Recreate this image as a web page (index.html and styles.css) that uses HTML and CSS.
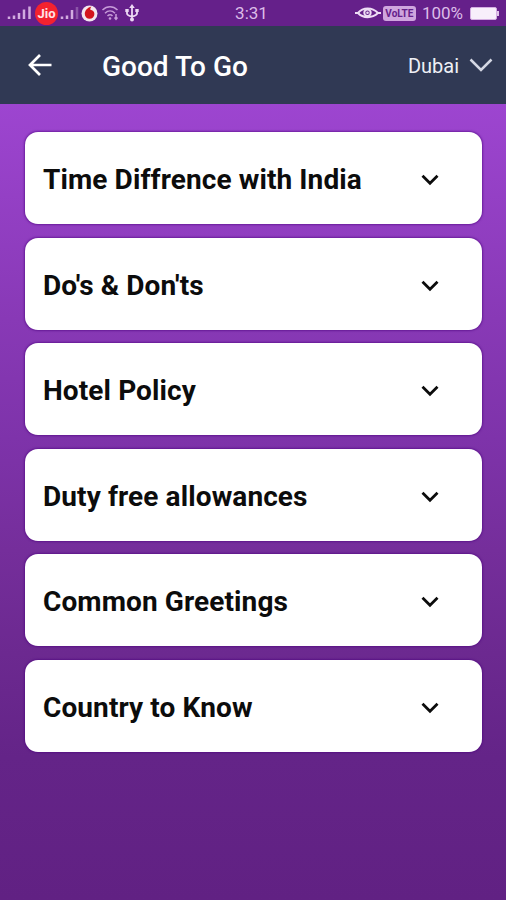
FILE: index.html
```html
<!DOCTYPE html>
<html lang="en">
<head>
    <meta charset="UTF-8">
    <meta name="viewport" content="width=device-width, initial-scale=1.0">
    <title>Good To Go</title>
    <link rel="stylesheet" href="styles.css">
</head>
<body>
    <!-- Status bar -->
    <div class="status-bar">
        <div class="status-left">
            <svg class="signal" width="25" height="14" viewBox="0 0 25 14">
                <path d="M2 10.5V13M7 9.5V13M12 7V13M17 3.5V13M22.5 0.5V13"/>
            </svg>
            <span class="jio">Jio</span>
            <svg class="signal second" width="20" height="14" viewBox="0 0 20 14">
                <path d="M2 10.5V13M7 9.5V13M12 4V13"/>
                <path class="faint" d="M17 1V13"/>
            </svg>
            <svg class="vodafone" width="17" height="17" viewBox="0 0 17 17">
                <circle cx="8.5" cy="8.5" r="8" fill="#f3e6ee"/>
                <path d="M10.5 1.500C6.500 2.500 3.800 5.500 3.800 9a4.800 4.800 0 0 0 9.600 0C13.400 6.500 11.500 5 9.300 4.700c0-1.400.3-2.300 1.200-3.200z" fill="#d3141c"/>
            </svg>
            <svg class="wifi" width="19" height="16" viewBox="0 0 19 16">
                <path d="M1.500 5C6 .8 12 .8 16.500 5M4 8.200C7 5.200 11 5.200 14 8.200M6.500 11c1.700-1.600 3.500-1.600 5 0"/>
                <circle class="dot" cx="9" cy="13.500" r="1.300"/>
                <path d="M15 9V14M13.500 12.500L15 14.300L16.500 12.500"/>
            </svg>
            <svg class="usb" width="14" height="18" viewBox="0 0 14 18">
                <path class="line" d="M7 3V15M2 6.500V9.500Q2 11.500 7 12.500M12 6.500V9.500Q12 11.500 7 12.500"/>
                <path d="M7 0L9.800 4H4.200zM.3 5H3.700V8H.3zM10.300 5H13.700V8H10.300z"/>
                <circle cx="7" cy="15.500" r="2"/>
            </svg>
        </div>
        <div class="clock">3:31</div>
        <div class="status-right">
            <svg class="eye" width="28" height="14" viewBox="0 0 28 14">
                <path d="M1 7H4C9 1 18 1 24 7H27M4 7C9 12.500 18 12.500 24 7"/>
                <circle cx="13.500" cy="6.800" r="3.200"/>
                <circle class="pupil" cx="13.500" cy="6.800" r="1.300"/>
            </svg>
            <span class="volte">VoLTE</span>
            <span class="percent">100%</span>
            <span class="battery"></span>
        </div>
    </div>

    <!-- Header -->
    <header>
        <svg class="back" width="24" height="22" viewBox="0 0 24 22">
            <path d="M23.500 11H2M12 1L2 11L12 21"/>
        </svg>
        <h1>Good To Go</h1>
        <div class="city">
            <span>Dubai</span>
            <svg width="24" height="14" viewBox="0 0 24 14">
                <path d="M1.500 1.500L12 12L22.500 1.500"/>
            </svg>
        </div>
    </header>

    <!-- Accordion list -->
    <main>
        <div class="card">
            <h2>Time Diffrence with India</h2>
            <svg class="chevron" width="18" height="12" viewBox="0 0 18 12"><path d="M1.500 1.800L9 9.300L16.500 1.800"/></svg>
        </div>
        <div class="card">
            <h2>Do's &amp; Don'ts</h2>
            <svg class="chevron" width="18" height="12" viewBox="0 0 18 12"><path d="M1.500 1.800L9 9.300L16.500 1.800"/></svg>
        </div>
        <div class="card">
            <h2>Hotel Policy</h2>
            <svg class="chevron" width="18" height="12" viewBox="0 0 18 12"><path d="M1.500 1.800L9 9.300L16.500 1.800"/></svg>
        </div>
        <div class="card">
            <h2>Duty free allowances</h2>
            <svg class="chevron" width="18" height="12" viewBox="0 0 18 12"><path d="M1.500 1.800L9 9.300L16.500 1.800"/></svg>
        </div>
        <div class="card">
            <h2>Common Greetings</h2>
            <svg class="chevron" width="18" height="12" viewBox="0 0 18 12"><path d="M1.500 1.800L9 9.300L16.500 1.800"/></svg>
        </div>
        <div class="card">
            <h2>Country to Know</h2>
            <svg class="chevron" width="18" height="12" viewBox="0 0 18 12"><path d="M1.500 1.800L9 9.300L16.500 1.800"/></svg>
        </div>
    </main>
</body>
</html>
```
FILE: styles.css
```css
* {
    margin: 0;
    padding: 0;
    box-sizing: border-box;
}

body {
    font-family: Roboto, sans-serif;
    height: 100vh;
    display: flex;
    flex-direction: column;
    overflow: hidden;
    background-color: #612183;
}

svg {
    display: block;
    flex-shrink: 0;
    fill: none;
}

/* Status bar */
.status-bar {
    height: 26px;
    display: grid;
    grid-template-columns: 1fr auto 1fr;
    align-items: center;
    background-color: #65208a;
    color: #dcbce8;
}

.status-left,
.status-right {
    display: flex;
    align-items: center;
}

.status-left {
    padding-left: 7px;
}

.status-right {
    justify-content: flex-end;
    padding-right: 9px;
}

.signal {
    stroke: #d2abe0;
    stroke-width: 2.5;
}

.signal .faint {
    stroke: #8c55a8;
}

.jio {
    width: 23px;
    height: 23px;
    margin: 1px 2px 0 3px;
    border-radius: 50%;
    background-color: #f3222f;
    color: #ffe4e6;
    font-size: 13px;
    font-weight: 700;
    line-height: 23px;
    text-align: center;
}

.vodafone {
    margin-left: 1px;
}

.wifi {
    margin-left: 3px;
    stroke: #c79bd9;
    stroke-width: 1.5;
}

.wifi .dot {
    fill: #c79bd9;
    stroke: none;
}

.usb {
    margin-left: 5px;
    fill: #ecd9f3;
}

.usb .line {
    fill: none;
    stroke: #ecd9f3;
    stroke-width: 1.8;
}

.clock {
    padding-right: 3px;
    font-size: 17px;
    line-height: 26px;
}

.eye {
    stroke: #eeddf5;
    stroke-width: 2;
}

.eye .pupil {
    fill: #eeddf5;
    stroke: none;
}

.volte {
    width: 33px;
    height: 15px;
    margin-left: 1px;
    border-radius: 3px;
    background-color: #cfa5de;
    color: #65208a;
    font-size: 10px;
    font-weight: 700;
    line-height: 15px;
    text-align: center;
}

.percent {
    margin: 0 7px 0 6px;
    font-size: 17px;
    line-height: 26px;
}

.battery {
    width: 27px;
    height: 13px;
    border-radius: 2px;
    border: 1px solid #d4aee2;
    background-color: #f8effb;
    position: relative;
}

.battery::after {
    content: "";
    position: absolute;
    right: -3px;
    top: 3px;
    width: 2px;
    height: 5px;
    background-color: #e0c4ea;
}

/* Header */
header {
    height: 78.3px;
    display: flex;
    align-items: center;
    padding: 0 13px 0 28px;
    background-color: #303954;
    color: #fff;
}

.back {
    stroke: #fff;
    stroke-width: 2.7;
}

h1 {
    margin-left: 50px;
    padding-top: 4px;
    font-size: 28px;
    font-weight: 500;
    line-height: 34px;
}

.city {
    margin-left: auto;
    display: flex;
    align-items: center;
    gap: 10px;
    font-size: 20px;
    color: #eef0f6;
}

.city span {
    padding-top: 2px;
}

.city svg {
    stroke: #d5d8e4;
    stroke-width: 2.5;
}

/* Accordion list */
main {
    flex: 1;
    display: flex;
    flex-direction: column;
    gap: 13.8px;
    padding: 28.2px 24px 0 25px;
    background: linear-gradient(#9d45d0 0%, #8839b6 27%, #7e33aa 42%, #752e9b 56%, #6c2990 69%, #642488 82%, #612183 100%);
}

.card {
    height: 91.7px;
    display: flex;
    align-items: center;
    justify-content: space-between;
    padding: 4px 43px 0 18px;
    border-radius: 13px;
    background-color: #fff;
    box-shadow: 0 0 2px 1px rgba(75, 0, 125, 0.55);
}

h2 {
    font-size: 28px;
    font-weight: 700;
    letter-spacing: 0.1px;
    line-height: 34px;
    color: #0c0c0c;
}

.chevron {
    stroke: #0c0c0c;
    stroke-width: 2.8;
}
```
